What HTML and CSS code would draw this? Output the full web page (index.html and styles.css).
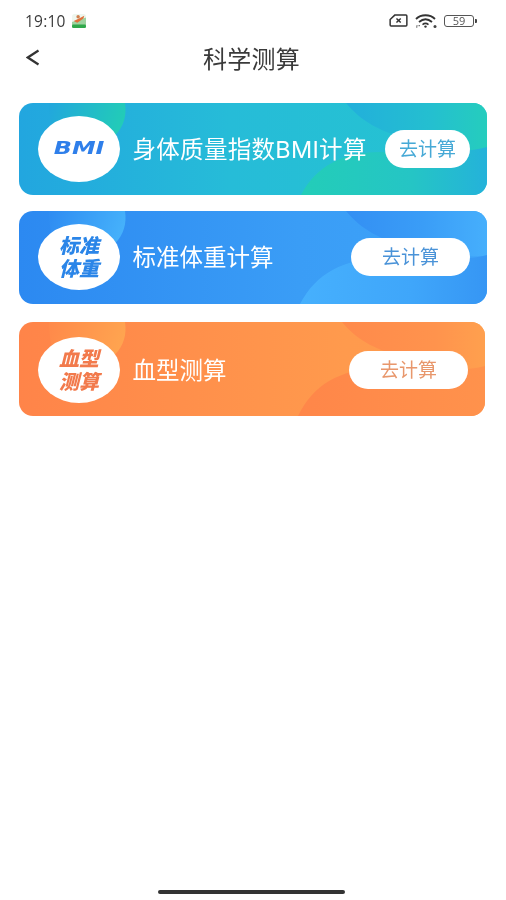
FILE: index.html
```html
<!DOCTYPE html>
<html lang="zh">
<head>
<meta charset="utf-8">
<title>科学测算</title>
<link rel="stylesheet" href="styles.css">
</head>
<body>
<div class="phone">
  <div class="status">
    <div class="status-left">
      <span class="time">19:10</span>
      <svg class="app-icon" viewBox="0 0 16 16" aria-hidden="true">
        <rect x="0" y="0" width="16" height="16" rx="3" fill="#eef6ee"/>
        <path d="M0 9 L16 4 V13 H0Z" fill="#9ed3a0"/>
        <path d="M2 8 L8 5 L14 2 L13 5 L9 8 L6 10Z" fill="#e0703a"/>
        <circle cx="7" cy="3" r="2" fill="#d08050"/>
        <rect x="0" y="12" width="16" height="4" rx="1.5" fill="#2fa84a"/>
      </svg>
    </div>
    <div class="status-right">
      <svg class="sim" viewBox="0 0 20 14" aria-hidden="true">
        <path d="M6 1.2 H18 a1 1 0 0 1 1 1 V11.8 a1 1 0 0 1 -1 1 H2 a1 1 0 0 1 -1 -1 V6Z" fill="none" stroke="#333" stroke-width="1.6"/>
        <path d="M7.8 4.8 L12.4 9.2 M12.4 4.8 L7.8 9.2" stroke="#333" stroke-width="1.6"/>
      </svg>
      <svg class="wifi" viewBox="0 0 22 14" aria-hidden="true">
        <path d="M1 5 C6 0 15 0 20 5" fill="none" stroke="#333" stroke-width="1.8"/>
        <path d="M4 8 C8 4.6 13 4.6 17 8" fill="none" stroke="#333" stroke-width="1.8"/>
        <path d="M7.5 10.6 C9.5 9 11.5 9 13.5 10.6" fill="none" stroke="#333" stroke-width="1.6"/>
        <circle cx="10.5" cy="12.6" r="1.2" fill="#333"/>
        <path d="M1 13 h1.4 M3.6 11.6 h1.2 M1.6 11.6 h.8" stroke="#555" stroke-width="1.1"/>
        <circle cx="20" cy="12.4" r="1.5" fill="#444"/>
      </svg>
      <div class="battery-wrap">
        <span class="battery">59</span>
        <span class="battery-tip"></span>
      </div>
    </div>
  </div>

  <div class="nav">
    <svg class="back" viewBox="0 0 14 18" aria-hidden="true">
      <path d="M12.5 1.5 L1.8 8.5 L12.5 15.5" fill="none" stroke="#333" stroke-width="2.2"/>
    </svg>
    <h1 class="title">科学测算</h1>
  </div>

  <div class="cards">
    <div class="card card-bmi">
      <svg class="decor" viewBox="0 0 468 92" preserveAspectRatio="none" aria-hidden="true">
        <defs>
          <linearGradient id="a1" x1="0" x2="1" y1="0.2" y2="0.4"><stop offset="0" stop-color="#22a8dc"/><stop offset="1" stop-color="#22cdb6"/></linearGradient>
          <linearGradient id="b1" x1="0" x2="1" y1="0" y2="0"><stop offset="0" stop-color="#22afdb"/><stop offset="0.6" stop-color="#24bfd0"/><stop offset="1" stop-color="#25cdbd"/></linearGradient>
          <linearGradient id="c1" x1="0" x2="1" y1="0" y2="0"><stop offset="0" stop-color="#23cdb8"/><stop offset="0.6" stop-color="#25c5c5"/><stop offset="1" stop-color="#24b2da"/></linearGradient>
        </defs>
        <path d="M30 0 H106 C110 25 92 45 60 46 C40 47 30 30 30 0Z" fill="url(#a1)"/>
        <path d="M327 0 C342 18 362 30 395 37 C425 44 450 46 468 50 V0Z" fill="url(#b1)"/>
        <path d="M282 92 C298 62 325 48 365 49 C410 52 445 50 468 44 V92Z" fill="url(#c1)"/>
      </svg>
      <div class="badge badge-bmi"><span class="bmi-mark">BMI</span></div>
      <div class="name name-bmi">身体质量指数BMI计算</div>
      <button class="go go-bmi">去计算</button>
    </div>

    <div class="card card-weight">
      <svg class="decor" viewBox="0 0 468 93" preserveAspectRatio="none" aria-hidden="true">
        <defs>
          <linearGradient id="a2" x1="0" x2="1" y1="0.2" y2="0.4"><stop offset="0" stop-color="#2f8df2"/><stop offset="1" stop-color="#46b2fb"/></linearGradient>
          <linearGradient id="b2" x1="0" x2="1" y1="0" y2="0"><stop offset="0" stop-color="#338ff3"/><stop offset="0.55" stop-color="#3a9df7"/><stop offset="1" stop-color="#46affc"/></linearGradient>
          <linearGradient id="c2" x1="0" x2="1" y1="0" y2="0"><stop offset="0" stop-color="#46b0fd"/><stop offset="0.6" stop-color="#3fa6fa"/><stop offset="1" stop-color="#3696f4"/></linearGradient>
        </defs>
        <path d="M30 0 H106 C110 25 92 45 60 46 C40 47 30 30 30 0Z" fill="url(#a2)"/>
        <path d="M327 0 C342 18 362 30 395 37 C425 44 450 46 468 45 V0Z" fill="url(#b2)"/>
        <path d="M281 93 C297 62 325 48 365 47 C410 50 445 50 468 44 V93Z" fill="url(#c2)"/>
      </svg>
      <div class="badge badge-weight">标准<br>体重</div>
      <div class="name">标准体重计算</div>
      <button class="go go-weight">去计算</button>
    </div>

    <div class="card card-blood">
      <svg class="decor" viewBox="0 0 466 94" preserveAspectRatio="none" aria-hidden="true">
        <defs>
          <linearGradient id="a3" x1="0" x2="1" y1="0.2" y2="0.4"><stop offset="0" stop-color="#ff8a4a"/><stop offset="1" stop-color="#ffa550"/></linearGradient>
          <linearGradient id="b3" x1="0" x2="1" y1="0" y2="0"><stop offset="0" stop-color="#ff8a4b"/><stop offset="0.65" stop-color="#ff934d"/><stop offset="1" stop-color="#ffa04e"/></linearGradient>
          <linearGradient id="c3" x1="0" x2="1" y1="0" y2="0"><stop offset="0" stop-color="#ff8649"/><stop offset="1" stop-color="#ff924c"/></linearGradient>
        </defs>
        <path d="M30 0 H106 C110 25 92 45 60 46 C40 47 30 30 30 0Z" fill="url(#a3)"/>
        <path d="M323 0 C338 18 358 30 395 37 C425 44 450 46 466 45 V0Z" fill="url(#b3)"/>
        <path d="M279 94 C295 62 320 48 360 46 C405 48 445 50 466 44 V94Z" fill="url(#c3)"/>
      </svg>
      <div class="badge badge-blood">血型<br>测算</div>
      <div class="name">血型测算</div>
      <button class="go go-blood">去计算</button>
    </div>
  </div>

  <div class="home-bar"></div>
</div>
</body>
</html>
```
FILE: styles.css
```css
* { box-sizing: border-box; }
html, body { margin: 0; padding: 0; background: #fff; }
body { font-family: "Noto Sans CJK SC", "Noto Sans", sans-serif; color: #333; }

.phone { width: 506px; height: 900px; position: relative; overflow: hidden; background: #fff; filter: blur(0.45px); }

.status { height: 40px; padding: 10px 29px 0 25px; display: flex; justify-content: space-between; align-items: flex-start; }
.status-left { display: flex; align-items: center; gap: 5px; height: 21px; }
.time { font-family: "Open Sans", sans-serif; font-size: 15.5px; color: #3a3a3a; letter-spacing: 0.2px; }
.app-icon { width: 16px; height: 14px; }
.status-right { display: flex; align-items: center; height: 21px; }
.sim { width: 19px; height: 13px; margin-left: 1px; margin-right: 7px; }
.wifi { width: 22px; height: 14px; margin-right: 7px; }
.battery-wrap { display: flex; align-items: center; }
.battery { width: 30px; height: 12px; border: 1.2px solid #555; border-radius: 3px; font-family: "Open Sans", sans-serif; font-size: 11px; line-height: 9.5px; text-align: center; color: #555; }
.battery-tip { width: 2px; height: 4px; margin-left: 1px; background: #444; border-radius: 0 1px 1px 0; }

.nav { height: 38px; position: relative; display: flex; align-items: center; justify-content: center; padding-bottom: 2px; }
.back { position: absolute; left: 26px; top: 9px; width: 14px; height: 18px; }
.title { margin: 0 0 0 -3px; font-size: 24px; font-weight: 400; line-height: 36px; letter-spacing: 0.2px; color: #3a3a3a; }

.cards { padding: 25px 0 0 19px; display: flex; flex-direction: column; }
.card { position: relative; overflow: hidden; display: flex; align-items: center; width: 468px; padding: 0 17px 0 19px; border-radius: 14px; }
.card-bmi { height: 92px; background: linear-gradient(90deg, #22a6df 0%, #26bcd8 45%, #25c4d0 100%); }
.card-weight { height: 93px; margin-top: 16px; padding-bottom: 2px; background: linear-gradient(90deg, #2c89f1 0%, #3a9df6 60%, #3ea4f9 100%); }
.card-blood { height: 94px; width: 466px; margin-top: 18px; padding-top: 1px; background: linear-gradient(90deg, #ff8449 0%, #ff9a4d 70%, #ff9d4e 100%); }

.decor { position: absolute; left: 0; top: 0; width: 100%; height: 100%; }

.badge { position: relative; flex: none; width: 82px; height: 66px; padding-bottom: 1px; border-radius: 50%; background: #fff; display: flex; align-items: center; justify-content: center; text-align: center; font-weight: 900; font-style: italic; font-size: 20px; line-height: 23px; }
.badge-bmi { font-family: "DejaVu Sans", sans-serif; font-size: 17px; color: #2f7fea; }
.bmi-mark { display: inline-block; transform: scaleX(1.4); }
.badge-weight { color: #2a85e8; }
.badge-blood { color: #f27a4c; }

.name { position: relative; flex: 1; margin-left: 12.5px; padding-top: 2px; font-family: "Inter", "Noto Sans CJK SC", sans-serif; font-size: 23.5px; line-height: 34px; color: #fff; white-space: nowrap; }
.name-bmi { letter-spacing: 0.3px; }

.go { position: relative; flex: none; height: 38px; border: 0; padding: 0 0 2px; border-radius: 19px; background: #fff; font-family: inherit; font-size: 19px; line-height: 36px; width: 119px; }
.go-bmi { width: 85px; color: #46a9d6; }
.go-weight { color: #4a93d8; }
.go-blood { color: #e8976c; }

.home-bar { position: absolute; left: 158px; top: 890px; width: 187px; height: 4px; border-radius: 2px; background: #333; }
```
